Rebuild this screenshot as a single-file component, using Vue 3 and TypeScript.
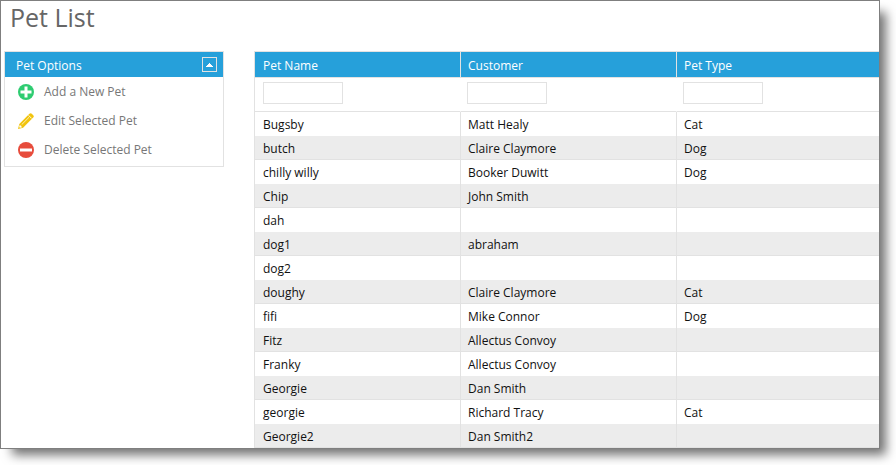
<script setup lang="ts">
import { ref } from 'vue'

interface Pet {
  name: string
  customer: string
  type: string
}

type Field = keyof Pet

const columns: { field: Field; label: string }[] = [
  { field: 'name', label: 'Pet Name' },
  { field: 'customer', label: 'Customer' },
  { field: 'type', label: 'Pet Type' },
]

const filters = ref<Record<Field, string>>({ name: '', customer: '', type: '' })

const pets: Pet[] = [
  { name: 'Bugsby', customer: 'Matt Healy', type: 'Cat' },
  { name: 'butch', customer: 'Claire Claymore', type: 'Dog' },
  { name: 'chilly willy', customer: 'Booker Duwitt', type: 'Dog' },
  { name: 'Chip', customer: 'John Smith', type: '' },
  { name: 'dah', customer: '', type: '' },
  { name: 'dog1', customer: 'abraham', type: '' },
  { name: 'dog2', customer: '', type: '' },
  { name: 'doughy', customer: 'Claire Claymore', type: 'Cat' },
  { name: 'fifi', customer: 'Mike Connor', type: 'Dog' },
  { name: 'Fitz', customer: 'Allectus Convoy', type: '' },
  { name: 'Franky', customer: 'Allectus Convoy', type: '' },
  { name: 'Georgie', customer: 'Dan Smith', type: '' },
  { name: 'georgie', customer: 'Richard Tracy', type: 'Cat' },
  { name: 'Georgie2', customer: 'Dan Smith2', type: '' },
]

const open = ref(true)
</script>

<template>
  <main class="window">
    <h1>Pet List</h1>
    <div class="layout">
      <aside class="panel">
        <header class="panel-head">
          <h2>Pet Options</h2>
          <button class="toggle" type="button" aria-label="Toggle Pet Options" :aria-expanded="open" @click="open = !open">
            <svg width="13" height="13" viewBox="0 0 13 13" shape-rendering="crispEdges" aria-hidden="true">
              <path d="M6 5h1v1h1v1h1v1h1v1H3V8h1V7h1V6h1z" fill="#fff" />
            </svg>
          </button>
        </header>
        <ul v-show="open" class="options">
          <li>
            <button class="option" type="button">
              <svg width="16" height="16" viewBox="0 0 16 16" aria-hidden="true">
                <circle cx="8" cy="8" r="8" fill="#2ecc71" />
                <path d="M6.500 2.500h3v4h4v3h-4v4h-3v-4h-4v-3h4z" fill="#fff" />
              </svg>
              Add a New Pet
            </button>
          </li>
          <li>
            <button class="option" type="button">
              <svg width="16" height="16" viewBox="0 0 16 16" aria-hidden="true">
                <path d="M0 16l1.300-5.100L11.400.8Q12.600-.4 13.800.8L15.200 2.200Q16.400 3.400 15.200 4.600L5.100 14.700z" fill="#f1c40f" />
                <path d="M3.700 11.600L11 4.300" stroke="#fff" stroke-width=".7" fill="none" />
                <path d="M10.600 2.400l3 3" stroke="#fff" stroke-width=".9" />
                <path d="M1.800 11.800l2.400 2.400-2.200.6-.8-.8z" fill="#fff" />
              </svg>
              Edit Selected Pet
            </button>
          </li>
          <li>
            <button class="option" type="button">
              <svg width="16" height="16" viewBox="0 0 16 16" aria-hidden="true">
                <circle cx="8" cy="8" r="8" fill="#e74c3c" />
                <path d="M2 6.500h12v3H2z" fill="#fff" />
              </svg>
              Delete Selected Pet
            </button>
          </li>
        </ul>
      </aside>

      <table class="grid">
        <colgroup>
          <col class="col-name" />
          <col class="col-customer" />
          <col />
        </colgroup>
        <thead>
          <tr class="labels">
            <th v-for="c in columns" :key="c.field" scope="col">{{ c.label }}</th>
          </tr>
          <tr class="filters">
            <td v-for="c in columns" :key="c.field">
              <input v-model="filters[c.field]" type="text" :aria-label="c.label" />
            </td>
          </tr>
        </thead>
        <tbody>
          <tr v-for="pet in pets" :key="pet.name">
            <td v-for="c in columns" :key="c.field">{{ pet[c.field] }}</td>
          </tr>
        </tbody>
      </table>
    </div>
  </main>
</template>

<style>
body {
  background: #fff;
}
</style>

<style scoped>
.window {
  box-sizing: border-box;
  margin: 0 16px 16px 0;
  border: 1px solid #7f7f7f;
  background: #fff;
  box-shadow: 9px 9px 10px -3px rgba(0, 0, 0, 0.55);
  font-family: 'Segoe UI', 'Open Sans', 'Noto Sans', sans-serif;
  font-size: 12px;
  line-height: 16px;
  color: #111;
}

h1 {
  margin: 0;
  padding: 0 0 18px 9px;
  font-size: 25px;
  line-height: 32px;
  font-weight: 400;
  color: #666;
}

.layout {
  display: flex;
  align-items: flex-start;
  gap: 30px;
  padding-left: 3px;
}

.panel {
  box-sizing: border-box;
  flex: 0 0 220px;
  border: 1px solid #e2e2e2;
}

.panel-head {
  display: flex;
  align-items: center;
  justify-content: space-between;
  height: 25px;
  padding: 0 6px 0 11px;
  background: #26a0da;
  color: #fff;
}

h2 {
  margin: 0;
  padding-top: 2px;
  font-size: 12px;
  line-height: 16px;
  font-weight: 500;
}

.toggle {
  display: flex;
  padding: 0;
  border: 1px solid #e2e2e2;
  background: none;
}

.options {
  margin: 0;
  padding: 0 0 2px;
  list-style: none;
}

.option {
  display: flex;
  align-items: center;
  gap: 10px;
  width: 100%;
  height: 29px;
  padding: 0 13px;
  border: 0;
  background: none;
  font: inherit;
  color: #777;
  text-align: left;
}

.grid {
  flex: 1;
  table-layout: fixed;
  width: 100%;
  border-spacing: 0;
  border-top: 1px solid #e2e2e2;
}

.col-name {
  width: 206px;
}

.col-customer {
  width: 216px;
}

th,
td {
  box-sizing: border-box;
  height: 24px;
  padding: 5px 7px 0;
  border-left: 1px solid #e2e2e2;
  text-align: left;
  vertical-align: top;
  white-space: nowrap;
}

th:first-child,
td:first-child {
  padding-left: 8px;
}

.labels th {
  height: 26px;
  padding-top: 6px;
  border-bottom: 1px solid #e2e2e2;
  background: #26a0da;
  color: #fff;
  font-weight: 500;
}

.filters td {
  height: 34px;
  padding-top: 4px;
  border-bottom: 1px solid #e2e2e2;
}

.filters td + td {
  padding-left: 6px;
  border-left-color: transparent;
}

input {
  display: block;
  box-sizing: border-box;
  width: 80px;
  height: 22px;
  padding: 0 4px;
  border: 1px solid #e2e2e2;
  font: inherit;
}

tbody tr:nth-child(even) td {
  border-bottom: 1px solid #e2e2e2;
  background: #ececec;
}
</style>
